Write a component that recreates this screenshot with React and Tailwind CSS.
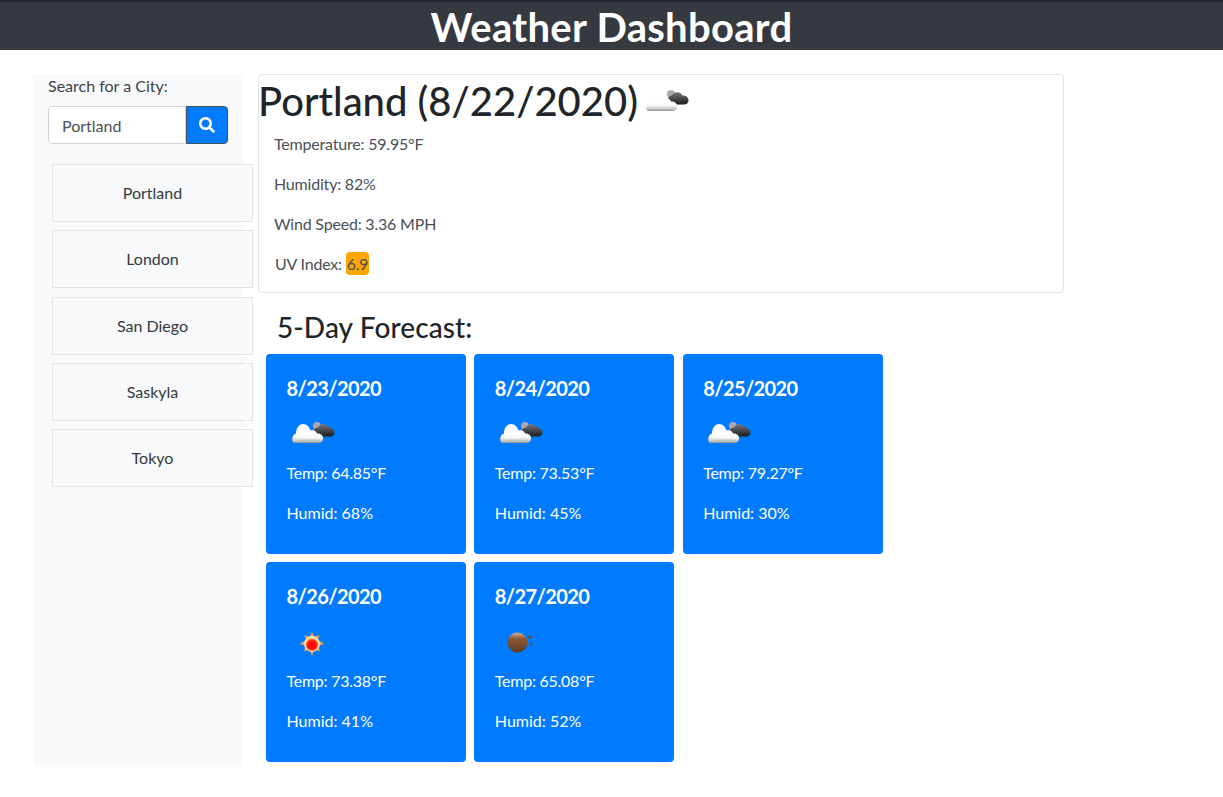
import { FaSearch } from "react-icons/fa"

const cities = ["Portland", "London", "San Diego", "Saskyla", "Tokyo"]

const forecast = [
  { date: "8/23/2020", icon: "cloud", temp: "64.85", humid: "68" },
  { date: "8/24/2020", icon: "cloud", temp: "73.53", humid: "45" },
  { date: "8/25/2020", icon: "cloud", temp: "79.27", humid: "30" },
  { date: "8/26/2020", icon: "sun", temp: "73.38", humid: "41" },
  { date: "8/27/2020", icon: "moon", temp: "65.08", humid: "52" },
]

function CloudIcon({ id, className }) {
  return (
    <svg viewBox="0 0 46 28" className={className}>
      <defs>
        <linearGradient id={`white-${id}`} x1="0" y1="0" x2="0" y2="1">
          <stop offset="0" stopColor="#ffffff" />
          <stop offset="0.7" stopColor="#fbfbfb" />
          <stop offset="0.9" stopColor="#c4c4c4" />
          <stop offset="1" stopColor="#8f8f8f" />
        </linearGradient>
        <linearGradient id={`dark-${id}`} x1="0" y1="0" x2="0" y2="1">
          <stop offset="0" stopColor="#777777" />
          <stop offset="1" stopColor="#1c1c1c" />
        </linearGradient>
      </defs>
      <circle cx="27" cy="7" r="4" fill="#a9a9a9" />
      <path
        d="M25 17C22 14 24 8 28 8.500C30 4 37 4 38.500 8.500C42 8 45 11 44.500 14C44 17 41 17.500 39 17.500L27 17.500Z"
        fill={`url(#dark-${id})`}
      />
      <path
        d="M4 24C1.500 24 1.500 15 6 14.500C6 8 10 5 13 5C17 5 19.500 8 20.500 11.500C23 10 26 11.500 27 14.500C31 14 33.500 17 33 20C33 23 30 24 28 24Z"
        fill={`url(#white-${id})`}
      />
    </svg>
  )
}

function SunIcon() {
  return (
    <svg viewBox="0 0 30 30" className="h-[28px] w-[28px]">
      <defs>
        <radialGradient id="sun-core" cx="0.5" cy="0.55" r="0.5">
          <stop offset="0" stopColor="#ff0000" />
          <stop offset="0.7" stopColor="#fb1a06" />
          <stop offset="1" stopColor="#ff9a3a" />
        </radialGradient>
      </defs>
      <path
        d="M15 2l2.500 5.500L23 5l-1.500 5.500L28 15l-6 2 1.500 6-6-2L15 28l-2.500-7-6 2L8 17l-6-2 6.500-4.500L7 5l5.500 2.500z"
        fill="#e7a24a"
      />
      <circle cx="15" cy="15" r="8.500" fill="#fde3c0" />
      <circle cx="15" cy="15.500" r="6.800" fill="url(#sun-core)" />
    </svg>
  )
}

function MoonIcon() {
  return (
    <svg viewBox="0 0 30 30" className="h-[30px] w-[30px]">
      <defs>
        <linearGradient id="moon-ball" x1="0" y1="0" x2="0" y2="1">
          <stop offset="0" stopColor="#d9b08f" />
          <stop offset="0.3" stopColor="#8d5a38" />
          <stop offset="1" stopColor="#5f3a22" />
        </linearGradient>
      </defs>
      <circle cx="12.500" cy="15.500" r="10" fill="url(#moon-ball)" />
      <circle cx="25" cy="10" r="1.800" fill="#69503c" />
      <circle cx="26" cy="16.500" r="1.500" fill="#69503c" />
    </svg>
  )
}

function ForecastCard({ day, index }) {
  return (
    <div className="flex h-[200px] w-[200px] flex-col rounded-[4px] bg-[#007bff] px-[20.5px] pt-[22px] text-white">
      <h5 className="text-[20px] font-bold leading-6 tracking-[-0.6px]">{day.date}</h5>
      <div className="mt-[13px] flex h-[40px] items-center pl-[3px]">
        {day.icon === "cloud" && <CloudIcon id={index} className="h-[28px] w-[46px]" />}
        {day.icon === "sun" && <div className="pl-[8px] pt-[5px]"><SunIcon /></div>}
        {day.icon === "moon" && <div className="pl-[7px] pt-[2px]"><MoonIcon /></div>}
      </div>
      <p className="mt-2 leading-6 tracking-[-0.25px]">Temp: {day.temp}°F</p>
      <p className="mt-4 leading-6">Humid: {day.humid}%</p>
    </div>
  )
}

export default function App() {
  return (
    <div className="min-h-[797px] bg-white font-['Lato',sans-serif] text-[16px] leading-6 text-[#212529]">
      <header className="h-[50px] border-t-2 border-[#23272b] bg-[#343a40] text-center text-[40px] font-bold leading-[50px] tracking-[0.3px] text-white">
        Weather Dashboard
      </header>

      <div className="mt-6 flex items-start pl-[33px]">
        <aside className="h-[693px] w-[210px] shrink-0 bg-[#f8f9fa] px-[15px]">
          <label className="block leading-6 text-[#3d4349]">Search for a City:</label>
          <div className="mt-2 flex h-[38px] w-[180px]">
            <div className="flex w-[138px] items-center rounded-l-[4px] border border-[#ced4da] bg-white pl-[13px] pt-px text-[#495057]">
              Portland
            </div>
            <button className="flex w-[42px] items-center justify-center rounded-r-[4px] border border-[#45525f] bg-[#007bff] text-white">
              <FaSearch className="h-4 w-4" />
            </button>
          </div>
          <ul className="mt-5 ml-1 flex w-[201px] flex-col gap-[8.33px]">
            {cities.map((city) => (
              <li
                key={city}
                className="flex h-[58px] items-center justify-center border border-[#e2e5e8] bg-[#f8f9fa] text-[#343a40]"
              >
                {city}
              </li>
            ))}
          </ul>
        </aside>

        <main className="ml-[15px] w-[806px]">
          <section className="h-[219px] rounded-[4px] border border-[#e1e3e5] bg-white">
            <div className="-ml-px flex h-[52px] items-center">
              <h2 className="text-[40px] font-medium leading-[48px]">Portland (8/22/2020)</h2>
              <CloudIcon id="today" className="ml-[6px] h-[28px] w-[46px]" />
            </div>
            <div className="pl-[15px] tracking-[-0.2px] text-[#495057]">
              <p className="mt-[5px]">Temperature: 59.95°F</p>
              <p className="mt-4">Humidity: 82%</p>
              <p className="mt-4">Wind Speed: 3.36 MPH</p>
              <p className="mt-4 pl-px">
                UV Index: <span className="rounded-[4px] bg-[#ffa500] px-px py-[2px] tracking-[-0.4px]">6.9</span>
              </p>
            </div>
          </section>

          <h3 className="mt-[15px] ml-[19px] text-[28px] font-medium leading-[38px] tracking-[0.1px]">5-Day Forecast:</h3>
          <div className="mt-2 ml-2 flex flex-wrap gap-x-[8.33px] gap-y-2">
            {forecast.map((day, index) => (
              <ForecastCard key={day.date} day={day} index={index} />
            ))}
          </div>
        </main>
      </div>
    </div>
  )
}
